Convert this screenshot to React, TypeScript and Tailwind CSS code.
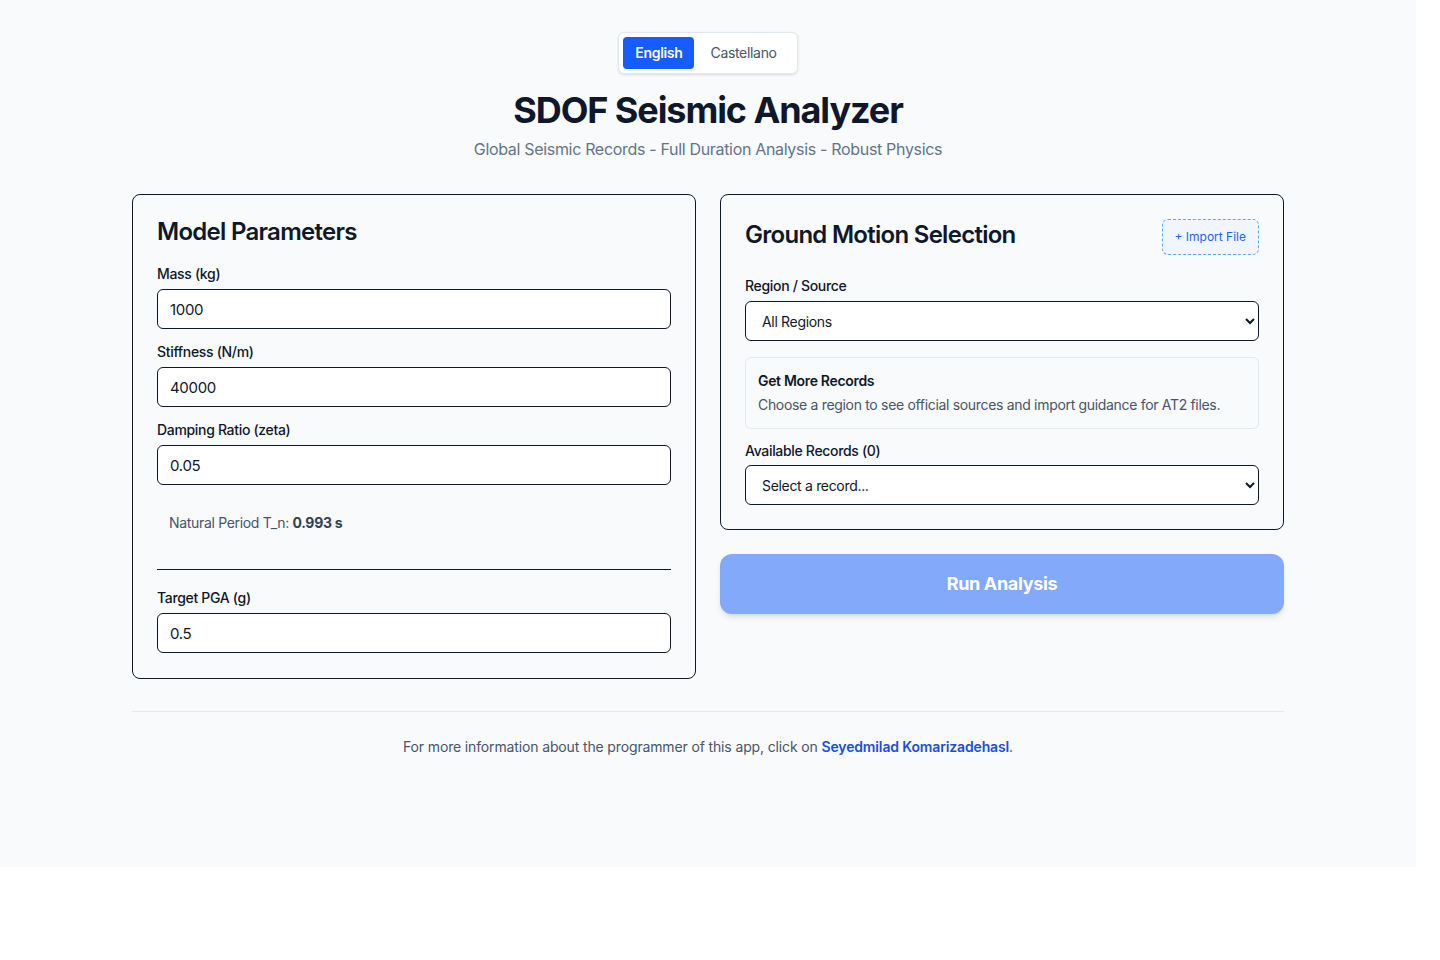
import { useState } from 'react';

const Field = ({ label, value }: { label: string; value: string }) => (
  <div className="flex flex-col">
    <label className="text-sm font-medium text-[#0f172a] leading-5 mb-[5px]">{label}</label>
    <input
      defaultValue={value}
      className="h-10 w-full rounded-md border border-[#0f172a] bg-white px-3 text-[15px] text-[#0f172a] outline-none"
    />
  </div>
);

export default function App() {
  const [lang, setLang] = useState<'en' | 'es'>('en');

  return (
    <div className="w-[1416px] h-[867px] bg-[#f8fafc] font-['Inter',sans-serif] tracking-[-0.02em] text-[#0f172a]">
      <div className="mx-auto w-[1152px] pt-8">
        <div className="flex justify-center">
          <div className="flex rounded-md border border-[#e2e8f0] bg-white p-1 shadow-sm">
            <button
              onClick={() => setLang('en')}
              className={
                lang === 'en'
                  ? 'h-8 rounded px-3 text-sm font-semibold text-white bg-[#165dff]'
                  : 'h-8 rounded px-3 text-sm text-[#475569]'
              }
            >
              English
            </button>
            <button
              onClick={() => setLang('es')}
              className={
                lang === 'es'
                  ? 'h-8 rounded px-4 text-sm font-semibold text-white bg-[#165dff]'
                  : 'h-8 rounded px-4 text-sm text-[#475569]'
              }
            >
              Castellano
            </button>
          </div>
        </div>

        <h1 className="mt-[14px] text-center text-[36px] font-bold leading-[44px] tracking-[-0.03em] text-[#0f172a]">
          SDOF Seismic Analyzer
        </h1>
        <p className="mt-[5px] text-center text-base leading-6 text-[#64748b]">
          Global Seismic Records - Full Duration Analysis - Robust Physics
        </p>

        <div className="mt-[33px] grid grid-cols-2 items-start gap-6">
          {/* left card */}
          <div className="rounded-lg border border-[#0f172a] px-6 pt-[22px] pb-[25px]">
            <h2 className="text-2xl font-semibold leading-[30px] tracking-[-0.03em] text-[#0f172a]">
              Model Parameters
            </h2>
            <div className="mt-[17px] flex flex-col gap-[13px]">
              <Field label="Mass (kg)" value="1000" />
              <Field label="Stiffness (N/m)" value="40000" />
              <Field label="Damping Ratio (zeta)" value="0.05" />
            </div>
            <div className="mt-[28px] px-3 text-sm leading-5 text-[#475569]">
              Natural Period T_n: <span className="font-bold text-[#334155]">0.993 s</span>
            </div>
            <hr className="mt-[36px] border-t border-[#0f172a]" />
            <div className="mt-[18px]">
              <Field label="Target PGA (g)" value="0.5" />
            </div>
          </div>

          {/* right column */}
          <div className="flex flex-col gap-6">
            <div className="rounded-lg border border-[#0f172a] px-6 pt-6 pb-6">
              <div className="flex items-start justify-between">
                <h2 className="mt-[1px] text-2xl font-semibold leading-[30px] tracking-[-0.03em] text-[#0f172a]">
                  Ground Motion Selection
                </h2>
                <button className="h-9 rounded-md border border-dashed border-[#60a5fa] bg-[#eff6ff] px-3 text-xs tracking-normal text-[#2563eb]">
                  + Import File
                </button>
              </div>

              <label className="mt-[21px] block text-sm font-medium leading-5 mb-[5px]">Region / Source</label>
              <select className="h-10 w-full rounded-md border border-[#0f172a] bg-white px-3 text-sm text-[#0f172a]">
                <option>All Regions</option>
              </select>

              <div className="mt-4 rounded-md border border-[#e2e8f0] bg-[#f8fafc] px-3 pt-[13px] pb-[13px]">
                <div className="text-sm font-semibold leading-5 text-[#0f172a]">Get More Records</div>
                <div className="mt-1 text-sm leading-5 text-[#475569]">
                  Choose a region to see official sources and import guidance for AT2 files.
                </div>
              </div>

              <label className="mt-3 block text-sm font-medium leading-5 mb-1">Available Records (0)</label>
              <select className="h-10 w-full rounded-md border border-[#0f172a] bg-white px-3 text-sm text-[#0f172a]">
                <option>Select a record...</option>
              </select>
            </div>

            <button className="h-[60px] w-full rounded-xl bg-[#83aafa] text-lg font-bold text-white shadow-md">
              Run Analysis
            </button>
          </div>
        </div>

        <div className="mt-8 border-t border-[#e2e8f0] pt-[25px] text-center text-sm leading-5 tracking-[-0.01em] text-[#475569]">
          For more information about the programmer of this app, click on{' '}
          <a href="#" className="font-semibold text-[#1d4ed8]">
            Seyedmilad Komarizadehasl
          </a>
          .
        </div>
      </div>
    </div>
  );
}
